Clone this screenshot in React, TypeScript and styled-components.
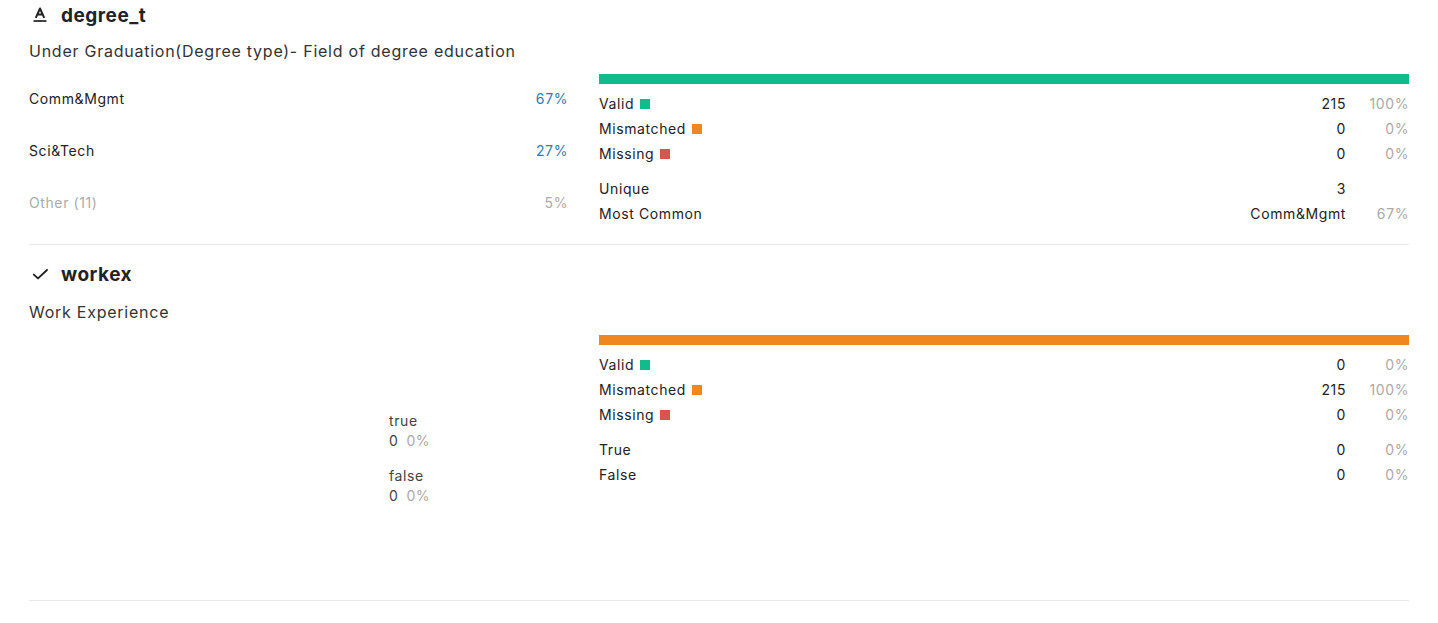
import React from "react";
import styled, { createGlobalStyle } from "styled-components";

const GlobalStyle = createGlobalStyle`
  body {
    margin: 0;
    background: #fff;
    font-family: Inter, "Noto Sans", "Liberation Sans", sans-serif;
    color: #222;
  }
`;

const COLORS = {
  valid: "#0fbd8c",
  mismatched: "#f0861f",
  missing: "#d9534f",
};

interface StatRow {
  label: string;
  count: string;
  pct?: string;
}

const Page = () => (
  <Wrapper>
    <GlobalStyle />

    <Section>
      <Header>
        <IconBox>
          <svg width="16" height="16" viewBox="0 0 16 16" fill="none">
            <path d="M3.8 10.8 L8 1.5 L12.2 10.8 M5.3 7.6 H10.7" stroke="#222" strokeWidth="2" strokeLinejoin="round" />
            <path d="M1.5 14 H14.5" stroke="#222" strokeWidth="1.7" />
          </svg>
        </IconBox>
        <Title>degree_t</Title>
      </Header>
      <Subtitle>Under Graduation(Degree type)- Field of degree education</Subtitle>

      <Body>
        <CategoryList>
          <Category>
            <span>Comm&amp;Mgmt</span>
            <CategoryPct>67%</CategoryPct>
          </Category>
          <Category>
            <span>Sci&amp;Tech</span>
            <CategoryPct>27%</CategoryPct>
          </Category>
          <Category $muted>
            <span>Other (11)</span>
            <span>5%</span>
          </Category>
        </CategoryList>

        <Stats
          barColor={COLORS.valid}
          quality={[
            { label: "Valid", count: "215", pct: "100%" },
            { label: "Mismatched", count: "0", pct: "0%" },
            { label: "Missing", count: "0", pct: "0%" },
          ]}
          extra={[
            { label: "Unique", count: "3" },
            { label: "Most Common", count: "Comm&Mgmt", pct: "67%" },
          ]}
        />
      </Body>
    </Section>

    <Section>
      <Header>
        <IconBox>
          <svg width="17" height="16" viewBox="0 0 17 16" fill="none">
            <path d="M1.8 8.6 L6 12.4 L15 4" stroke="#222" strokeWidth="1.9" strokeLinecap="round" strokeLinejoin="round" />
          </svg>
        </IconBox>
        <Title>workex</Title>
      </Header>
      <Subtitle $wide>Work Experience</Subtitle>

      <Body>
        <BoolChart>
          <BoolItem>
            <BoolLabel>true</BoolLabel>
            <BoolValue>
              0<BoolPct>0%</BoolPct>
            </BoolValue>
          </BoolItem>
          <BoolItem>
            <BoolLabel>false</BoolLabel>
            <BoolValue>
              0<BoolPct>0%</BoolPct>
            </BoolValue>
          </BoolItem>
        </BoolChart>

        <Stats
          barColor={COLORS.mismatched}
          quality={[
            { label: "Valid", count: "0", pct: "0%" },
            { label: "Mismatched", count: "215", pct: "100%" },
            { label: "Missing", count: "0", pct: "0%" },
          ]}
          extra={[
            { label: "True", count: "0", pct: "0%" },
            { label: "False", count: "0", pct: "0%" },
          ]}
        />
      </Body>
    </Section>
  </Wrapper>
);

interface StatsProps {
  barColor: string;
  quality: StatRow[];
  extra: StatRow[];
}

const swatch: Record<string, string> = {
  Valid: COLORS.valid,
  Mismatched: COLORS.mismatched,
  Missing: COLORS.missing,
};

const Stats = ({ barColor, quality, extra }: StatsProps) => (
  <StatsPanel>
    <Bar $color={barColor} />
    <StatGroup>
      {quality.map((row) => (
        <StatLine key={row.label}>
          <StatLabel>
            {row.label}
            <Swatch $color={swatch[row.label]} />
          </StatLabel>
          <StatCount>{row.count}</StatCount>
          <StatPct>{row.pct}</StatPct>
        </StatLine>
      ))}
    </StatGroup>
    <StatGroup>
      {extra.map((row) => (
        <StatLine key={row.label}>
          <StatLabel>{row.label}</StatLabel>
          <StatCount>{row.count}</StatCount>
          <StatPct>{row.pct}</StatPct>
        </StatLine>
      ))}
    </StatGroup>
  </StatsPanel>
);

export default Page;

const Wrapper = styled.div`
  padding: 0 29px;
  letter-spacing: 0.6px;
`;

const Section = styled.section`
  padding: 14px 0 15px;
  border-bottom: 1px solid #e8e8e8;

  &:first-child {
    padding-top: 0;
    padding-bottom: 16px;
  }
`;

const Header = styled.div`
  display: flex;
  align-items: center;
  gap: 11px;
  height: 30px;
`;

const IconBox = styled.span`
  display: flex;
  width: 20px;
  justify-content: center;
  margin-left: 1px;
`;

const Title = styled.h2`
  margin: 0;
  font-size: 19px;
  font-weight: 700;
  letter-spacing: 0.5px;
  color: #1f2328;
`;

const Subtitle = styled.p<{ $wide?: boolean }>`
  margin: ${(p) => (p.$wide ? "11px" : "9px")} 0 11px;
  font-size: 16px;
  line-height: 24px;
  letter-spacing: 0.75px;
  color: #333;
`;

const Body = styled.div`
  display: grid;
  grid-template-columns: 539px 810px;
  column-gap: 31px;
`;

const CategoryList = styled.div`
  display: flex;
  flex-direction: column;
  margin-top: -2px;
`;

const Category = styled.div<{ $muted?: boolean }>`
  display: flex;
  justify-content: space-between;
  align-items: center;
  height: 52px;
  font-size: 14px;
  color: ${(p) => (p.$muted ? "#ababab" : "#222")};
`;

const CategoryPct = styled.span`
  color: #337ab7;
`;

const StatsPanel = styled.div`
  display: flex;
  flex-direction: column;
`;

const Bar = styled.div<{ $color: string }>`
  height: 10px;
  background: ${(p) => p.$color};
  margin-bottom: 7px;
`;

const StatGroup = styled.div`
  display: flex;
  flex-direction: column;

  & + & {
    margin-top: 10px;
  }
`;

const StatLine = styled.div`
  display: grid;
  grid-template-columns: 1fr auto 63px;
  align-items: center;
  height: 25px;
  font-size: 14px;
`;

const StatLabel = styled.span`
  display: flex;
  align-items: center;
  gap: 6px;
  color: #222;
`;

const Swatch = styled.span<{ $color: string }>`
  width: 10px;
  height: 10px;
  background: ${(p) => p.$color};
`;

const StatCount = styled.span`
  text-align: right;
  color: #222;
`;

const StatPct = styled.span`
  text-align: right;
  color: #aaa;
`;

const BoolChart = styled.div`
  display: flex;
  flex-direction: column;
  justify-content: center;
  gap: 15px;
  height: 247px;
  margin-bottom: 3px;
  padding-left: 360px;
`;

const BoolItem = styled.div`
  display: flex;
  flex-direction: column;
  font-size: 14px;
  line-height: 20px;
`;

const BoolLabel = styled.span`
  color: #444;
`;

const BoolValue = styled.span`
  color: #444;
`;

const BoolPct = styled.span`
  color: #aaa;
  margin-left: 8px;
`;
